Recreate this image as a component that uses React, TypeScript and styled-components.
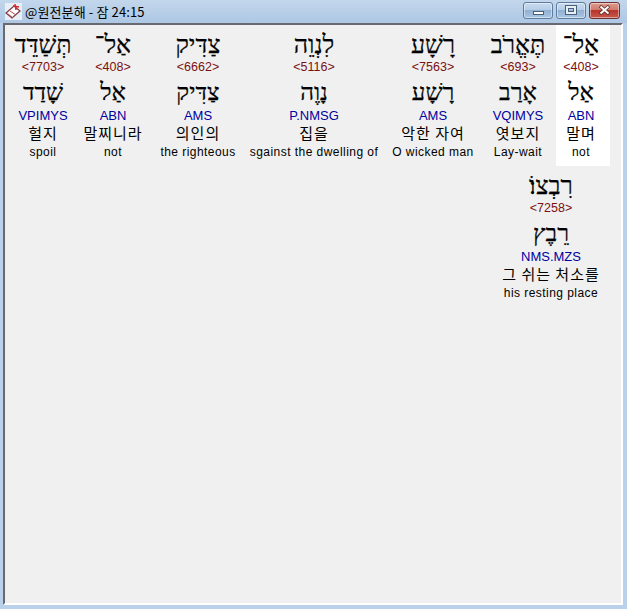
import React from "react";
import styled, { createGlobalStyle } from "styled-components";

const Global = createGlobalStyle`
  html, body { margin: 0; padding: 0; width: 627px; height: 609px; overflow: hidden; background: #b9d1ea; }
  #root { width: 627px; height: 609px; }
`;

const Win = styled.div`
  width: 627px; height: 609px; box-sizing: border-box;
  display: flex; flex-direction: column;
  background: #b9d1ea;
  padding: 0 4px 4px 3px;
`;
const TitleBar = styled.div`
  height: 23px; margin: 0 -4px 0 -3px; padding: 0 7px 0 5px; box-sizing: border-box;
  display: flex; align-items: center;
  background: linear-gradient(#c3d7ec, #adc7e4);
`;
const Title = styled.span`
  margin-left: 3px; font: 13px "Noto Sans CJK KR", "Liberation Sans", sans-serif; letter-spacing: .12px; color: #000; flex: 1; white-space: pre;
`;
const Controls = styled.div`display: flex; gap: 3px; margin-top: -3px;`;
const Ctl = styled.div<{ $w: number; $close?: boolean }>`
  width: ${p => p.$w}px; height: 17px; box-sizing: border-box;
  border: 1px solid ${p => (p.$close ? "#6e3034" : "#5f7c9c")}; border-radius: 3px;
  display: flex; align-items: center; justify-content: center;
  box-shadow: inset 0 0 0 1px rgba(255,255,255,.45);
  background: ${p => p.$close
    ? "linear-gradient(#dd9c8f 0%, #d07a6c 45%, #b8352b 50%, #c65a4c 100%)"
    : "linear-gradient(#c9dcf0 0%, #b5cde7 45%, #92b0d2 50%, #a9c6e4 100%)"};
`;
const MinGlyph = styled.div`width: 11px; height: 4px; margin-top: 5px; background: #fff; border: 1px solid #4a5f78; box-sizing: border-box;`;
const MaxGlyph = styled.div`width: 10px; height: 8px; background: transparent; border: 2px solid #e8eef5; box-sizing: border-box; box-shadow: 0 0 0 1px #4a5f78, inset 0 0 0 1px #4a5f78;`;

const Client = styled.div`
  flex: 1; min-height: 0;
  background: #f0f0f0;
  border-style: solid; border-width: 2px;
  border-color: #666a70 #fff #fff #666a70;
  display: flex; flex-flow: row-reverse wrap;
  justify-content: flex-start; align-content: flex-start;
  padding: 0 11px 0 0;
`;
const Word = styled.div<{ $w: number; $sel?: boolean }>`
  width: ${p => p.$w}px; height: 141px;
  flex: none; box-sizing: border-box;
  padding-right: ${p => (p.$sel ? 4 : 0)}px;
  background: ${p => (p.$sel ? "#fff" : "transparent")};
  display: flex; flex-direction: column; align-items: center;
  white-space: nowrap;
`;
const Heb = styled.div`
  height: 29px; margin-top: 5px; font: 25px/29px "Liberation Serif", serif; color: #000; direction: rtl; -webkit-text-stroke: .25px #000;
`;
const Strong = styled.div`
  height: 16px; font: 12.5px/16px "Liberation Sans", sans-serif; color: #7a1010;
`;
const Lex = styled.div`
  height: 31px; margin-top: 2px; font: 24px/31px "Liberation Serif", serif; color: #000; direction: rtl; -webkit-text-stroke: .25px #000;
`;
const Morph = styled.div`
  height: 16px; font: 13px/16px "Liberation Sans", sans-serif; color: #0000a0;
`;
const Kor = styled.div`
  height: 18px; font: 15px/18px "Noto Sans CJK KR", sans-serif; letter-spacing: 1px; color: #000;
`;
const Eng = styled.div`
  height: 16px; margin-top: 2px; font: 12px/16px "Liberation Sans", sans-serif; letter-spacing: .45px; color: #000;
`;

const words = [
  { w: 54, sel: true, h: "אַל־", s: "<408>", l: "אַל", m: "ABN", k: "말며", e: "not" },
  { w: 76, h: "תֶּאֱרֹב", s: "<693>", l: "אָרַב", m: "VQIMYS", k: "엿보지", e: "Lay-wait" },
  { w: 94, h: "רָשָׁע", s: "<7563>", l: "רָשָׁע", m: "AMS", k: "악한 자여", e: "O wicked man" },
  { w: 144, h: "לִנְוֵה", s: "<5116>", l: "נָוֶה", m: "P.NMSG", k: "집을", e: "sgainst the dwelling of" },
  { w: 88, h: "צַדִּיק", s: "<6662>", l: "צַדִּיק", m: "AMS", k: "의인의", e: "the righteous" },
  { w: 82, h: "אַל־", s: "<408>", l: "אַל", m: "ABN", k: "말찌니라", e: "not" },
  { w: 58, h: "תְּשַׁדֵּד", s: "<7703>", l: "שָׁדַד", m: "VPIMYS", k: "헐지", e: "spoil" },
  { w: 118, h: "רִבְצוֹ׃", s: "<7258>", l: "רֵבֶץ", m: "NMS.MZS", k: "그 쉬는 처소를", e: "his resting place" },
];

const BookIcon = () => (
  <svg width="17" height="17" viewBox="0 0 17 17">
    <rect x="0" y="0" width="17" height="17" fill="#e8eef5" />
    <path d="M1 10 L9 3 L15 8 L7 15 Z" fill="#fff" stroke="#7a3b44" strokeWidth="1.2" />
    <path d="M3 11 L8 15 M5 8 L11 12" stroke="#b04a55" strokeWidth="1" />
    <path d="M10 1 L11 7 M8 3 L14 4" stroke="#d8262c" strokeWidth="1.4" />
  </svg>
);

const CloseX = () => (
  <svg width="13" height="10" viewBox="0 0 13 10">
    <path d="M2 1 L11 9 M11 1 L2 9" stroke="#5c2a28" strokeWidth="3.4" />
    <path d="M2.5 1.5 L10.5 8.5 M10.5 1.5 L2.5 8.5" stroke="#fff" strokeWidth="2" />
  </svg>
);

export default function App() {
  return (
    <Win>
      <Global />
      <TitleBar>
        <BookIcon />
        <Title>@원전분해 - 잠 24:15</Title>
        <Controls>
          <Ctl $w={30}><MinGlyph /></Ctl>
          <Ctl $w={30}><MaxGlyph /></Ctl>
          <Ctl $w={31} $close><CloseX /></Ctl>
        </Controls>
      </TitleBar>
      <Client>
        {words.map((x, i) => (
          <Word key={i} $w={x.w} $sel={x.sel}>
            <Heb>{x.h}</Heb>
            <Strong>{x.s}</Strong>
            <Lex>{x.l}</Lex>
            <Morph>{x.m}</Morph>
            <Kor>{x.k}</Kor>
            <Eng>{x.e}</Eng>
          </Word>
        ))}
      </Client>
    </Win>
  );
}
